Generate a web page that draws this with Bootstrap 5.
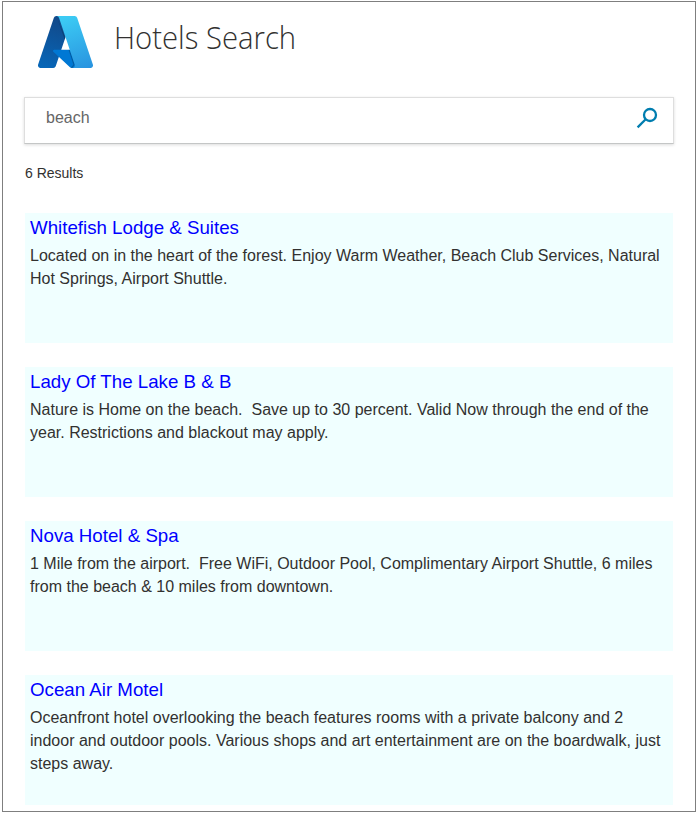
<!DOCTYPE html>
<html lang="en">
<head>
<meta charset="utf-8">
<meta name="viewport" content="width=device-width, initial-scale=1">
<title>Hotels Search</title>
<link href="https://cdn.jsdelivr.net/npm/bootstrap@5.3.0/dist/css/bootstrap.min.css" rel="stylesheet">
<style>
  body { font-family: "Liberation Sans", Arial, sans-serif; color: #323130; line-height: 23px; background: #fff; overflow: hidden; }
  .app-frame { margin: 1px 1px 0 2px; height: 811px; border: 1px solid #7f7f7f; padding: 0 21px; }
  .app-header { height: 95px; padding: 14px 0 0 14px; }
  .app-title { font: 300 32px/40px "Open Sans", "Noto Sans", sans-serif; margin: 1px 0 0 21px; color: #323130; transform: scaleX(.915); transform-origin: left; }
  .search-box { height: 47px; border: 1px solid #dedede; border-bottom-color: #c4c6c6; box-shadow: 0 1px 3px rgba(0,0,0,.14); padding: 0 15px 0 21px; }
  .search-input { color: #666; height: 40px; line-height: 24px; }
  .search-icon { margin-top: 9px; }
  .result-count { font-size: 14px; line-height: 20px; margin: 19px 1px 30px; }
  .results { padding: 0 1px; gap: 24px; }
  .result-item { height: 130px; background: #f0ffff; padding: 4px 5px; }
  .result-title { color: #00f; font-size: 18.72px; line-height: 22px; margin-bottom: 5px; }
  .result-text { white-space: pre-line; }
</style>
<script src="https://cdn.jsdelivr.net/npm/bootstrap@5.3.0/dist/js/bootstrap.bundle.min.js"></script>
</head>
<body>
<main class="app-frame">
  <header class="app-header d-flex align-items-start">
    <svg width="55" height="52" viewBox="4 2.5 88 83" preserveAspectRatio="none" aria-label="Azure" role="img">
      <defs>
        <linearGradient id="ga" x1="-1032" y1="145" x2="-1059" y2="65" gradientTransform="matrix(1 0 0 -1 1075 158)" gradientUnits="userSpaceOnUse"><stop offset="0" stop-color="#114a8b"/><stop offset="1" stop-color="#0669bc"/></linearGradient>
        <linearGradient id="gb" x1="46" y1="5" x2="76" y2="92" gradientUnits="userSpaceOnUse"><stop offset="0" stop-color="#3ccbf4"/><stop offset="1" stop-color="#2892df"/></linearGradient>
      </defs>
      <path fill="url(#ga)" d="M33.34 2.54h26.04l-27.03 80.1a4.15 4.15 0 0 1-3.94 2.81H8.15a4.14 4.14 0 0 1-3.93-5.47L29.4 5.38a4.15 4.15 0 0 1 3.94-2.83z"/>
      <path fill="#0078d4" d="M71.17 56.26H29.88a1.91 1.91 0 0 0-1.3 3.31l26.53 24.76a4.17 4.17 0 0 0 2.85 1.13h23.38z"/>
      <path fill="#000" fill-opacity=".22" d="M33.5 3 48 37.5l-1.2 3L35 6zM54.8 56.26l8 24-4 5.2-2.5-.3 4.2-5-7.6-23.9z"/>
      <path fill="url(#gb)" d="M66.6 5.36a4.15 4.15 0 0 0-3.94-2.82H33.65a4.15 4.15 0 0 1 3.93 2.82l25.18 74.62a4.15 4.15 0 0 1-3.93 5.48h29.02a4.15 4.15 0 0 0 3.93-5.48z"/>
    </svg>
    <h1 class="app-title">Hotels Search</h1>
  </header>

  <div class="search-box d-flex align-items-start justify-content-between">
    <div class="search-input pt-2">beach</div>
    <svg class="search-icon" width="22" height="22" viewBox="0 0 22 22" fill="none" stroke="#007daf" stroke-width="2.3" role="img" aria-label="Search">
      <circle cx="14" cy="8" r="6"/>
      <path d="M9.7 12.3 1.6 20.4"/>
    </svg>
  </div>

  <p class="result-count">6 Results</p>

  <section class="results d-flex flex-column">
    <article class="result-item"><h2 class="result-title fw-normal">Whitefish Lodge &amp; Suites</h2><p class="result-text mb-0">Located on in the heart of the forest. Enjoy Warm Weather, Beach Club Services, Natural
Hot Springs, Airport Shuttle.</p></article>
    <article class="result-item"><h2 class="result-title fw-normal">Lady Of The Lake B &amp; B</h2><p class="result-text mb-0">Nature is Home on the beach. &nbsp;Save up to 30 percent. Valid Now through the end of the
year. Restrictions and blackout may apply.</p></article>
    <article class="result-item"><h2 class="result-title fw-normal">Nova Hotel &amp; Spa</h2><p class="result-text mb-0">1 Mile from the airport. &nbsp;Free WiFi, Outdoor Pool, Complimentary Airport Shuttle, 6 miles
from the beach &amp; 10 miles from downtown.</p></article>
    <article class="result-item"><h2 class="result-title fw-normal">Ocean Air Motel</h2><p class="result-text mb-0">Oceanfront hotel overlooking the beach features rooms with a private balcony and 2
indoor and outdoor pools. Various shops and art entertainment are on the boardwalk, just
steps away.</p></article>
  </section>
</main>
</body>
</html>
